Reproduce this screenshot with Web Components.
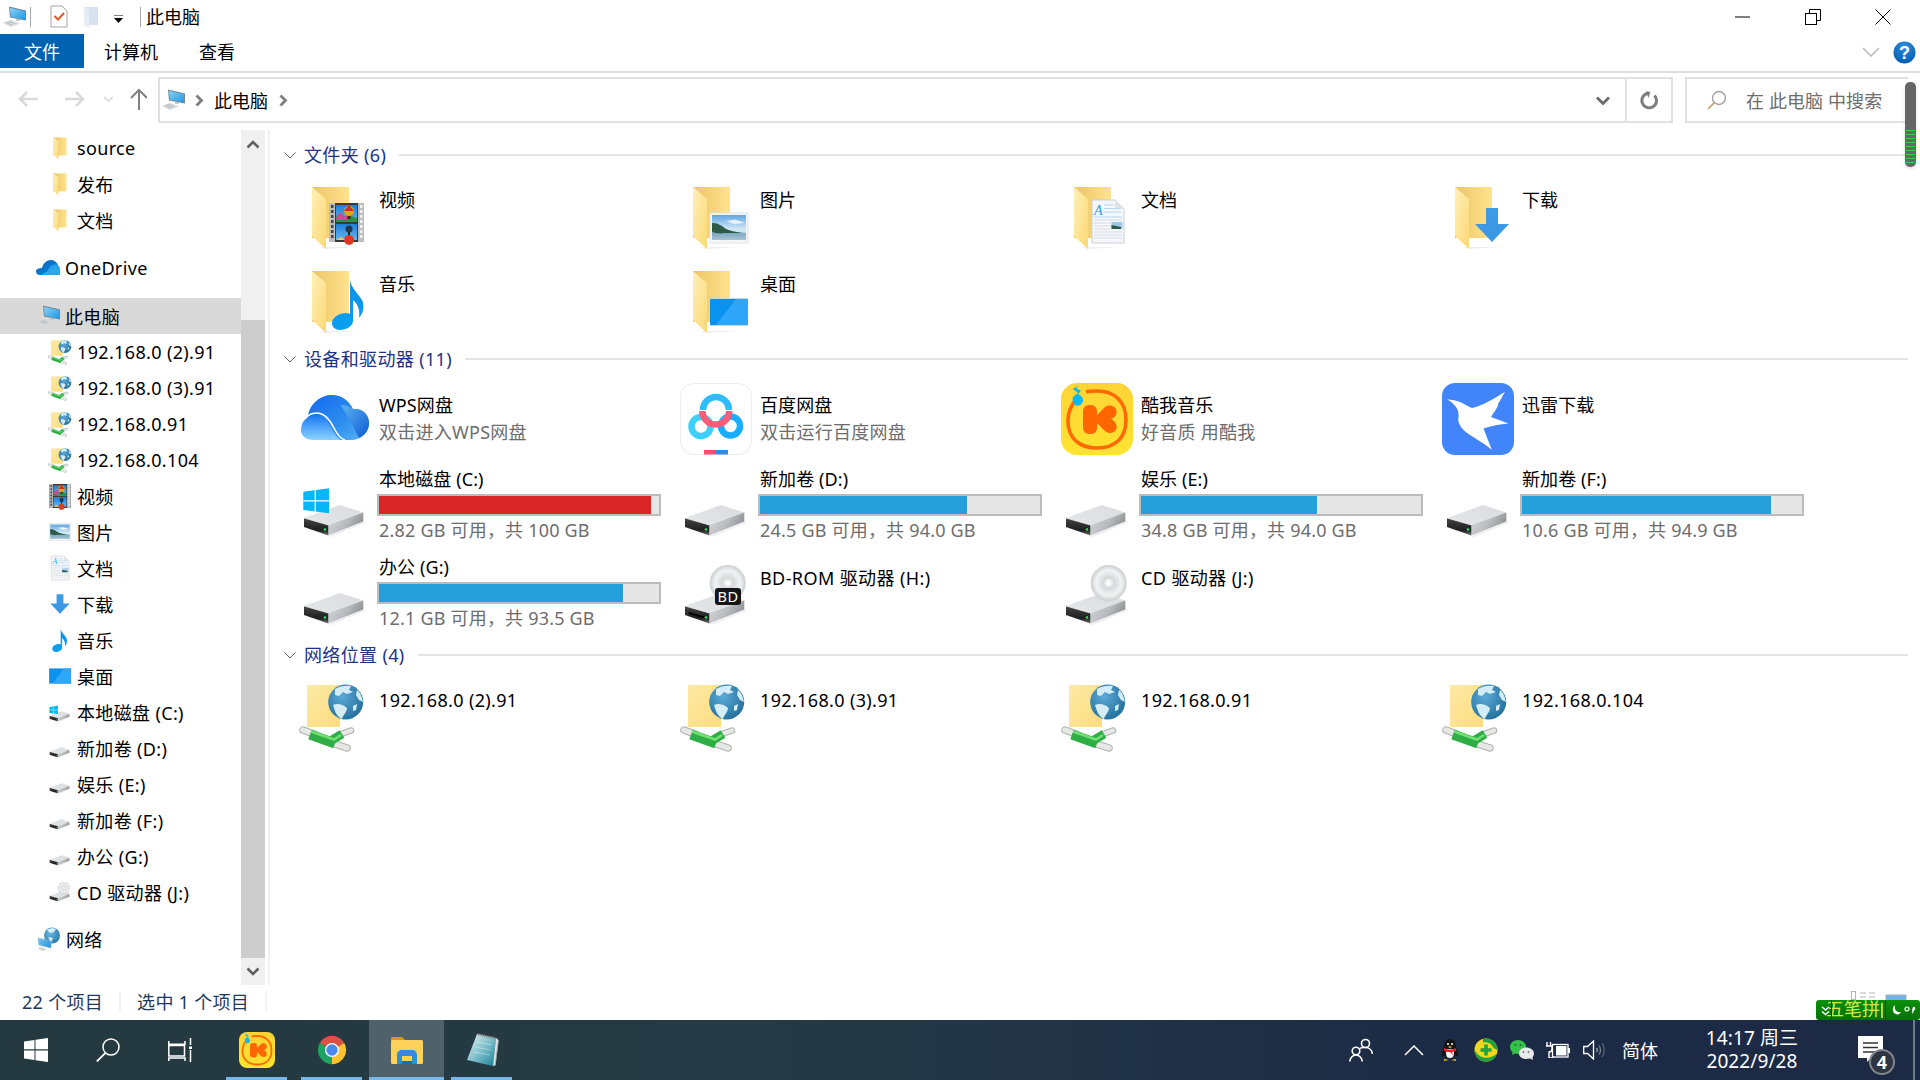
<!DOCTYPE html>
<html lang="zh-CN">
<head>
<meta charset="utf-8">
<title>此电脑</title>
<style>
html,body{margin:0;padding:0;background:#fff}
body{width:1920px;height:1080px;overflow:hidden;display:flex;flex-direction:column;position:relative;
font-family:"Noto Sans","Noto Sans CJK SC","DejaVu Sans",sans-serif;font-size:18px;color:#000}
</style>
</head>
<body>
<explorer-window></explorer-window>
<task-bar></task-bar>
<scroll-badge></scroll-badge>
<ime-bar></ime-bar>
<script>
/* ---------- icon pieces, drawn on a 72x72 tile box ---------- */
const grad=(id,x1,y1,x2,y2,stops)=>`<linearGradient id="${id}" x1="${x1}" y1="${y1}" x2="${x2}" y2="${y2}">${stops.map(([o,c])=>`<stop offset="${o}" stop-color="${c}"/>`).join('')}</linearGradient>`;
const P={};
P.folder=`<defs>${grad('fb',0,0,1,0,[[0,'#ecc566'],[1,'#ffe38e']])}${grad('ff',0,0,1,1,[[0,'#fff0b8'],[1,'#fbd874']])}</defs>
<path d="M20 62L60 62L27 64z" fill="#eee"/>
<path d="M13 2H50V53H13z" fill="url(#fb)"/><path d="M13 2L27 14V64L13 51z" fill="url(#ff)"/>`;
P.film=`<defs>${grad('s1',0,0,0,1,[[0,'#1c7fd8'],[1,'#69b5f0']])}</defs>
<rect x="30" y="18" width="35" height="39" fill="#3a3a3a"/>
<rect x="30" y="18" width="6" height="39" fill="#bdbdbd"/><rect x="59" y="18" width="6" height="39" fill="#bdbdbd"/>
${[20,25,30,35,40,45,50].map(y=>`<rect x="32" y="${y}" width="2.5" height="3" fill="#444"/><rect x="61" y="${y}" width="2.5" height="3" fill="#eee"/>`).join('')}
<rect x="37" y="20" width="21" height="17" fill="url(#s1)"/><rect x="37" y="39" width="21" height="16" fill="url(#s1)"/>
<path d="M37 37V31L42 28L46 32L50 30L58 33V37z" fill="#2e9147"/><path d="M37 33L41 27L45 32L48 30V35H37z" fill="#d3469b"/>
<circle cx="50" cy="26" r="5" fill="#e0a51b"/><path d="M45 26H55L50 20z" fill="#cf2d20"/><rect x="48.5" y="31" width="3" height="3" fill="#3a2c1a"/>
<circle cx="50" cy="44" r="3.5" fill="#26344b"/><rect x="49" y="47" width="2" height="3" fill="#222"/>
<circle cx="50" cy="55" r="5" fill="#dc3a1f"/><path d="M37 55L42 52L46 55z" fill="#e7c85c"/>`;
P.photo=`<defs>${grad('s2',0,0,0,1,[[0,'#5fa4e2'],[.55,'#cfe6f5'],[1,'#cfe6f5']])}${grad('w',0,0,0,1,[[0,'#4d7f9c'],[1,'#a4c4d6']])}</defs>
<rect x="30" y="28" width="38" height="30" fill="#f4f6f8" stroke="#dfe3e6" stroke-width="1"/>
<rect x="32" y="30" width="34" height="25" fill="url(#s2)"/>
<path d="M46 36c4 0 7-2 10-1s6 1 8 3l-10 1z" fill="#fff" opacity=".8"/>
<path d="M32 43V38C38 38 42 41 46 44C52 47 60 47 66 48V55H32z" fill="url(#w)"/>
<path d="M32 47V38C38 38 42 41 46 44C50 46 56 47 62 48H44C40 49 36 48 32 47z" fill="#2e5a46"/>`;
P.doc=`<path d="M31 15H54L63 24V58H31z" fill="#f5f7fa" stroke="#c9ced4" stroke-width="1"/><path d="M54 15V24H63z" fill="#dfe4ea"/>
<text x="33" y="30" font-family="Liberation Serif" font-style="italic" font-size="14" fill="#2f95e3">A</text>
<path d="M43 20H53M43 23.5H58M43 27H60M33 32H61" stroke="#b4d8f3" stroke-width="1" fill="none"/>
<path d="M33 35H61M33 38H50M33 41H50M33 44H50M33 47H61M33 50H61M33 53H61" stroke="#d6dbe1" stroke-width="1" fill="none"/>
<rect x="50.5" y="37" width="11" height="7" fill="#9dc8e6"/><path d="M50.5 44V40L60 42V44z" fill="#2f5a4c"/>`;
P.down=`<defs>${grad('d',0,0,0,1,[[0,'#3d9ce8'],[1,'#3a95e0']])}</defs><path d="M44 23H56V39H67L50 57L33 39H44z" fill="url(#d)"/>`;
P.note=`<defs>${grad('n',0,0,0,1,[[0,'#0b8fe6'],[1,'#0aa0f2']])}</defs>
<path d="M51 10C51 18 59 24 63 31C66 37 64 45 60 49C61 43 60 36 54 31V52C54 57 47 61 41 61C36 61 33 58 33 54C33 48 41 44 47 44C49 44 51 45 51 45z" fill="url(#n)"/>`;
P.desktop=`<rect x="30" y="29" width="38" height="28" fill="#c8d6de"/><rect x="30" y="30" width="38" height="26" fill="#0a93ee"/><path d="M36 56L56 30H68V56z" fill="#2ea7fa"/>`;
const drive=`<defs>${grad('dr',0,0,1,.4,[[0,'#d6d8dc'],[.6,'#b9bbbe'],[1,'#8f9194']])}${grad('dt',0,1,1,0,[[0,'#e6e7ea'],[1,'#d9dbde']])}${grad('df',0,0,0,1,[[0,'#454545'],[.7,'#1f1f1f'],[1,'#777']])}</defs>
<path d="M5 47L41 34L64.300 41.500L29.300 54z" fill="url(#dt)"/>
<path d="M29.300 54L64.300 41.500V50.500L29.300 64.500z" fill="url(#dr)"/>
<path d="M5 47L29.300 54V64.500L5 56z" fill="url(#df)"/><path d="M5 47L29.300 54" stroke="#f2f2f2" stroke-width=".7"/>
<circle cx="26" cy="58.500" r="1.300" fill="#35e25c"/><path d="M29 65L64 51L68 51L32 66z" fill="#eee"/>`;
P.drive=drive;
P.windrive=drive+`<path d="M4.300 20.700L30 17.300V42.300L4.300 39z" fill="#05b7f5"/><path d="M16.300 19V41M4.300 29.800H30" stroke="#fff" stroke-width="1.300"/>`;
const disc=`<defs><radialGradient id="cdr"><stop offset="0" stop-color="#f7f7f7"/><stop offset=".35" stop-color="#d9dcdd"/><stop offset=".7" stop-color="#f2f3f3"/><stop offset="1" stop-color="#cbced0"/></radialGradient></defs>
<circle cx="47.700" cy="24" r="18" fill="url(#cdr)"/><circle cx="47.700" cy="24" r="5" fill="#eee" stroke="#cfd2d3" stroke-width="1"/><circle cx="47.700" cy="24" r="2" fill="#fff"/>`;
P.bd=drive+disc+`<rect x="35" y="29" width="26" height="17" rx="3" fill="#151515"/><text x="48" y="43" text-anchor="middle" font-family="Noto Sans" font-size="14.500" fill="#fff">BD</text><rect x="9" y="53" width="16" height="2" fill="#000" transform="rotate(16 9 53)"/>`;
P.cd=drive+disc;
P.net=`<defs>${grad('nf',0,0,1,1,[[0,'#fdeaa6'],[1,'#fedc7c']])}<radialGradient id="g" cx=".4" cy=".35" r=".75"><stop offset="0" stop-color="#5aa9d8"/><stop offset="1" stop-color="#1e6a96"/></radialGradient></defs>
<rect x="8" y="1" width="33" height="42" fill="url(#nf)"/>
<circle cx="46.700" cy="18" r="17.500" fill="url(#g)"/>
<path d="M36 5C40 2 48 1 52 2L50 6L54 8L48 10L44 8L40 12L36 11zM58 6C62 9 63 14 64 18L60 16L57 11zM34 21C38 19 44 20 48 24C48 28 44 31 43 35C40 34 37 30 36 27zM54 22L58 20L57 26L54 27z" fill="#d4ecf5"/>
<path d="M4 46L16 50.500" stroke="#aeb3ae" stroke-width="7.500" stroke-linecap="round"/><path d="M4 46L16 50.500" stroke="#e6e8e6" stroke-width="5.500" stroke-linecap="round"/>
<path d="M36 60L48 64" stroke="#aeb3ae" stroke-width="7.500" stroke-linecap="round"/><path d="M36 60L48 64" stroke="#e6e8e6" stroke-width="5.500" stroke-linecap="round"/>
<path d="M42 50L52 46.500" stroke="#aeb3ae" stroke-width="6.500" stroke-linecap="round"/><path d="M42 50L52 46.500" stroke="#e6e8e6" stroke-width="4.500" stroke-linecap="round"/>
<path d="M11 50.500L36 59.500" stroke="#2fae45" stroke-width="10" fill="none"/>
<path d="M33 56L43 50" stroke="#2fae45" stroke-width="9" fill="none"/>
<path d="M12 47.500L35 55.500L42 51" stroke="#74de76" stroke-width="2.500" fill="none"/>`;
P.wps=`<defs>${grad('w1',0,0,1,1,[[0,'#1268f0'],[.6,'#2f90ee'],[1,'#5db6f5']])}${grad('w2',0,0,0,1,[[0,'#1a78f2'],[1,'#8bd2ff']])}${grad('w3',0,0,1,1,[[0,'#5fb4ef'],[1,'#0c5ad6']])}</defs>
<path d="M9 33C11 20 22 12 33 12C43 12 50 18 54 26C63 25 70 31 70 40C70 50 62 57 52 57H20z" fill="url(#w1)"/>
<path d="M54 26C63 25 70 31 70 40C70 47 66 52 60 55C56 48 52 38 47 31C45 27 43 24 42 22C47 22 51 24 54 26z" fill="url(#w3)"/>
<path d="M2 47C2 38 9 32 17 32C25 32 29 38 33 46C36 52 38 55 42 57H14C7 57 2 53 2 47z" fill="url(#w2)"/>
<path d="M9 33C11 31 14 30 18 30C26 30 31 37 35 45C38 51 41 56 46 57" stroke="#fff" stroke-width="1.600" fill="none"/>`;
P.baidu=`<rect x=".5" y=".5" width="71" height="71" rx="13" fill="#fff" stroke="#ececec"/>
<circle cx="21" cy="43.500" r="9.500" fill="none" stroke="#3dd0fd" stroke-width="6.500"/>
<circle cx="50.500" cy="43" r="9.500" fill="none" stroke="#18adfe" stroke-width="6.500"/>
<path d="M23 27a13 13 0 0 1 26 0" fill="none" stroke="#2ebdfa" stroke-width="6.500"/>
<path d="M22.300 28a13.500 13.500 0 0 0 27 0" fill="none" stroke="#fb5c79" stroke-width="6.500"/>
<rect x="24" y="67" width="12" height="4.500" fill="#fb4d6d"/><rect x="36" y="67" width="12" height="4.500" fill="#2b8cf5"/>`;
P.kuwo=`<defs>${grad('ky',0,0,0,1,[[0,'#ffd335'],[1,'#ffe42f']])}</defs><rect width="72" height="72" rx="16" fill="url(#ky)"/>
<path d="M14 18C9 24 7 30 7 38C7 55 18 65 36 65C54 65 65 55 65 37C65 19 54 8 36 8C32 8 28 8 25 9" fill="none" stroke="#ff6a00" stroke-width="3.600"/>
<rect x="22" y="22" width="14" height="29" rx="6" fill="#ff6600"/>
<path d="M32 36L44 24C50 20 58 25 55 32C54 34 51 36 49 36C51 36 54 38 55 41C58 48 50 53 44 48z" fill="#ff6600"/>
<path d="M18 2L12 6L17 10L13 13C11 15 11 19 14 22C18 24 22 21 22 17C22 14 19 12 17 11L20 8L15 5z" fill="#04b9f5"/>`;
P.xunlei=`<rect width="72" height="72" rx="13" fill="#4285fb"/>
<path d="M5 16.300C10 17 14 17.500 18 19C23 21 27 24 30 25C40 23 53 15 63 8.700C60 14 58 18 56 21C56 25 51 30 49 34C54 36 60 38 66.500 40.500C58 41 49 43 41.500 45.500C44 52 47 60 50 67C42 60 34 56 28 52C20 47 15 40 16.500 34C17 30 16 27 14 24C12 21 8 18 5 16.300z" fill="#fff"/>`;
P.nav_net=`<defs>${grad('m',0,0,1,1,[[0,'#7cc8f2'],[1,'#1b8fdc']])}<radialGradient id="g2" cx=".4" cy=".35" r=".8"><stop offset="0" stop-color="#69b5df"/><stop offset="1" stop-color="#20709f"/></radialGradient></defs>
<circle cx="15" cy="8.500" r="8" fill="url(#g2)"/><path d="M10 3C13 1 17 1 19 2L17 5L13 6zM11 10L16 11L14 16z" fill="#d6eef7"/>
<path d="M1 11L14 14V21L2 18z" fill="url(#m)" stroke="#8db4cc" stroke-width=".6"/><path d="M3 20L10 22L6 24L1 22z" fill="#cfd4d8"/>`;
P.pc=`<defs>${grad('pm',0,0,1,1,[[0,'#8bd0f5'],[1,'#1c9ce8']])}</defs>
<path d="M7 1.500L24 5.500V15.500L8 12.500z" fill="#6d8597"/><path d="M8 2.800L23 6.300V14.500L8.800 11.700z" fill="url(#pm)"/>
<path d="M14 13.500L18 14.300L18 16L14 15.500z" fill="#b9c2c9"/>
<path d="M1 18L9 15L18 18.500L9 22z" fill="#d7dadd"/><path d="M3 18L9 16M5 19L11 17M7 20L13 18" stroke="#aeb3b7" stroke-width=".6"/>`;
P.onedrive=`<defs>${grad('od',0,0,1,1,[[0,'#0b68c4'],[1,'#0a85d9']])}${grad('od2',0,0,1,1,[[0,'#2aa6ef'],[1,'#1c8fe2']])}</defs>
<path d="M6 8C7 3 11 0 15 0C18 0 21 2 22 5L12 15H4C1 15 0 13 0 11C0 9 3 8 6 8z" fill="url(#od)"/>
<path d="M8 15L14 7C17 4 20 4 22 5.500C25 6 24 15 24 15z" fill="url(#od2)"/><path d="M24 8.500V15H6.500C6 15 7 13.500 8 13C10 12 11 12 12 12L13 10C16 7 21 6 24 8.500z" fill="#2aa8ee"/>`;
P.t_video=P.folder+P.film; P.t_photo=P.folder+P.photo; P.t_doc=P.folder+P.doc; P.t_down=P.folder+P.down; P.t_note=P.folder+P.note; P.t_desk=P.folder+P.desktop;

/* ---------- tiny element factory ---------- */
function def(tag,css,render){
  customElements.define(tag,class extends HTMLElement{
    connectedCallback(){
      if(this.shadowRoot) return;
      const root=this.attachShadow({mode:'open'});
      root.innerHTML=`<style>${css}</style>`+render(this);
    }
  });
}

/* x-ic: one icon from the table, at a size, optional crop */
def('x-ic',`:host{display:inline-flex;flex:none;line-height:0}svg{display:block;overflow:visible}`,el=>{
  const s=el.getAttribute('size')||72, vb=el.getAttribute('vb')||'0 0 72 72', h=el.getAttribute('h')||s;
  return `<svg xmlns="http://www.w3.org/2000/svg" width="${s}" height="${h}" viewBox="${vb}">${P[el.getAttribute('name')]}</svg>`;
});

/* title bar */
def('title-bar',`:host{display:flex;align-items:center;height:33px;flex:none}
.sep{width:1px;height:20px;background:#a8a8a8;flex:none}
.t{margin-left:5px;line-height:33px;padding-top:2px}
.btns{margin-left:auto;display:flex;padding-right:2px}
.b{width:70px;height:33px;display:flex;align-items:center;justify-content:center}
svg{display:block}`,()=>`
<x-ic name="pc" size="24" vb="0 0 24 24" style="margin:0 3px 0 2px"></x-ic>
<span class="sep" style="margin-right:19px;margin-left:1px"></span>
<svg width="18" height="23" viewBox="0 0 18 23"><path d="M1 1H12L17 6V22H1z" fill="#fff" stroke="#a5a5a5"/><path d="M4.500 11L8 14.500L14 8" fill="none" stroke="#e8562a" stroke-width="2"/></svg>
<svg width="15" height="22" viewBox="0 0 15 22" style="margin-left:16px"><path d="M0 1H14V19H5V22L0 19z" fill="#d8e1f0"/><path d="M0 1L5 4V22L0 19z" fill="#e7edf6"/></svg>
<svg width="9" height="8" viewBox="0 0 9 8" style="margin-left:15px;margin-top:4px"><path d="M0 0H9" stroke="#000"/><path d="M0 3H9L4.500 8z" fill="#000"/></svg>
<span class="sep" style="margin-left:17px"></span>
<span class="t">此电脑</span>
<div class="btns">
<div class="b"><svg width="16" height="16" viewBox="0 0 16 16"><path d="M0 8H15" stroke="#000"/></svg></div>
<div class="b"><svg width="16" height="16" viewBox="0 0 16 16"><rect x=".5" y="4.500" width="11" height="11" fill="none" stroke="#000"/><path d="M4.500 4V.5H15.500V11.500H12" fill="none" stroke="#000"/></svg></div>
<div class="b"><svg width="16" height="16" viewBox="0 0 16 16"><path d="M.5.500L15.500 15.500M15.500.5L.5 15.500" stroke="#000" fill="none"/></svg></div>
</div>`);

/* ribbon tabs */
def('rib-bon',`:host{display:flex;align-items:flex-start;height:38px;flex:none;border-bottom:2px solid #dfdfdf;box-sizing:content-box}
.tab{height:34px;line-height:36px;margin-top:1px;text-align:center}
.file{width:84px;background:#0063b1;color:#fff}
.right{margin-left:auto;display:flex;align-items:center;height:38px}
svg{display:block}`,()=>`
<div class="tab file">文件</div>
<div class="tab" style="margin-left:20px">计算机</div>
<div class="tab" style="margin-left:41px">查看</div>
<div class="right">
<svg width="18" height="10" viewBox="0 0 18 10" style="margin-right:13px"><path d="M1 1L9 9L17 1" fill="none" stroke="#bdbdbd" stroke-width="1.600"/></svg>
<svg width="23" height="23" viewBox="0 0 23 23" style="margin-right:4px"><defs><radialGradient id="h" cx=".5" cy=".25" r=".8"><stop offset="0" stop-color="#2d8fe0"/><stop offset="1" stop-color="#0058a8"/></radialGradient></defs><circle cx="11.500" cy="11.500" r="11" fill="url(#h)"/><text x="11.500" y="18" text-anchor="middle" font-family="Liberation Sans" font-weight="700" font-size="18" fill="#fff">?</text></svg>
</div>`);

/* address row */
def('address-row',`:host{display:flex;align-items:center;height:57px;flex:none;box-sizing:border-box}
svg{display:block;flex:none}
.box{height:46px;box-sizing:border-box;border:2px solid #e1e1e1;display:flex;align-items:center;margin-top:-3px}
.addr{width:1515px;margin-left:11px}
.search{width:223px;margin-left:12px;color:#6d6d6d;border-right:0;padding-left:20px}
.sp{flex:1}
.v{width:2px;height:100%;background:#e1e1e1}
`,()=>`
<svg width="147" height="24" viewBox="0 0 147 24" style="margin-top:-6px">
<path d="M38 12H20M27 5L20 12L27 19" fill="none" stroke="#d9d9d9" stroke-width="2.500"/>
<path d="M65 12H83M76 5L83 12L76 19" fill="none" stroke="#d9d9d9" stroke-width="2.500"/>
<path d="M104 10L108.500 14L113 10" fill="none" stroke="#dcdcdc" stroke-width="1.800"/>
<path d="M139 23V3M131 11L139 3L147 11" fill="none" stroke="#808080" stroke-width="2"/></svg>
<div class="box addr">
<x-ic name="pc" size="24" vb="0 0 24 24" style="margin-left:1px"></x-ic>
<svg width="9" height="13" viewBox="0 0 9 13" style="margin-left:10px"><path d="M1.500 1.500L6.500 6.500L1.500 11.500" fill="none" stroke="#7d7d7d" stroke-width="2.800"/></svg>
<span style="margin-left:10px">此电脑</span>
<svg width="9" height="13" viewBox="0 0 9 13" style="margin-left:11px"><path d="M1.500 1.500L6.500 6.500L1.500 11.500" fill="none" stroke="#7d7d7d" stroke-width="2.800"/></svg>
<span class="sp"></span>
<svg width="14" height="9" viewBox="0 0 14 9"><path d="M1 1.500L7 7.500L13 1.500" fill="none" stroke="#6b6b6b" stroke-width="2.800"/></svg>
<span style="width:15px"></span><span class="v"></span>
<svg width="18" height="19" viewBox="0 0 18 19" style="margin:0 13px 0 13px"><path d="M14.500 4.500A7.300 7.300 0 1 1 8 2.300" fill="none" stroke="#7d7d7d" stroke-width="3"/><path d="M7 0V7L11 1.800z" fill="#7d7d7d" transform="rotate(-20 8 3)"/></svg>
</div>
<div class="box search">
<svg width="20" height="20" viewBox="0 0 20 20"><circle cx="12" cy="8" r="6.500" fill="none" stroke="#a0a0a0" stroke-width="1.400"/><path d="M7.500 12.500L1 19" stroke="#c69a6a" stroke-width="1.600"/></svg>
<span style="margin-left:19px;white-space:nowrap;letter-spacing:.1px">在 此电脑 中搜索</span>
</div>`);

/* nav row */
def('nav-row',`:host{display:flex;align-items:center;height:36px;box-sizing:border-box;white-space:nowrap;letter-spacing:.35px}
:host([on]){background:#d9d9d9}
x-ic{margin-right:5px}`,el=>{
  const l=el.getAttribute('level')==='1'; const pad=l?(el.getAttribute('pad')||36):48;
  const size=el.getAttribute('size')||24;
  const vb=el.getAttribute('vb')||(el.getAttribute('icon')==='pc'?'0 0 24 24':'0 0 72 72');
  return `<x-ic name="${el.getAttribute('icon')}" size="${size}" vb="${vb}" style="margin-left:${pad}px"></x-ic><slot></slot>`;
});

/* nav pane */
def('nav-pane',`:host{display:flex;width:270px;flex:none;height:855px}
.list{width:241px;flex:none}
.gap{height:12px}.gap2{height:11px}
.bar{width:24px;flex:none;background:#f0f0f0;display:flex;flex-direction:column;align-items:center}
.bt{height:190px;width:24px;padding-top:10px;box-sizing:border-box;display:flex;justify-content:center}
.th{height:638px;width:24px;background:#cdcdcd}
.bb{flex:1;display:flex;justify-content:center;align-items:center}
.edge{width:3px}.line{width:2px;background:#f0f0f0}
svg{display:block}`,()=>`
<div class="list">
<nav-row icon="folder" vb="-2 -2 67 68" size="24">source</nav-row>
<nav-row icon="folder" vb="-2 -2 67 68">发布</nav-row>
<nav-row icon="folder" vb="-2 -2 67 68">文档</nav-row>
<div class="gap"></div>
<nav-row level="1" icon="onedrive" vb="0 0 24 16" h="16">OneDrive</nav-row>
<div class="gap"></div>
<nav-row level="1" on icon="pc" pad="36" size="24">此电脑</nav-row>
<nav-row icon="net" vb="0 0 66 66">192.168.0 (2).91</nav-row>
<nav-row icon="net" vb="0 0 66 66">192.168.0 (3).91</nav-row>
<nav-row icon="net" vb="0 0 66 66">192.168.0.91</nav-row>
<nav-row icon="net" vb="0 0 66 66">192.168.0.104</nav-row>
<nav-row icon="film" vb="28 18 39 39">视频</nav-row>
<nav-row icon="photo" vb="28 22 42 42">图片</nav-row>
<nav-row icon="doc" vb="25 15 43 43">文档</nav-row>
<nav-row icon="down" vb="29 19 42 42">下载</nav-row>
<nav-row icon="note" vb="24 10 51 51">音乐</nav-row>
<nav-row icon="desktop" vb="28 22 42 42">桌面</nav-row>
<nav-row icon="windrive">本地磁盘 (C:)</nav-row>
<nav-row icon="drive">新加卷 (D:)</nav-row>
<nav-row icon="drive">娱乐 (E:)</nav-row>
<nav-row icon="drive">新加卷 (F:)</nav-row>
<nav-row icon="drive">办公 (G:)</nav-row>
<nav-row icon="cd">CD 驱动器 (J:)</nav-row>
<div class="gap2"></div>
<nav-row level="1" icon="nav_net" vb="0 0 24 24" pad="37">网络</nav-row>
</div>
<div class="bar">
<div class="bt"><svg width="14" height="9" viewBox="0 0 14 9"><path d="M1.500 7.500L7 2L12.500 7.500" fill="none" stroke="#606060" stroke-width="2.600"/></svg></div>
<div class="th"></div>
<div class="bb"><svg width="14" height="9" viewBox="0 0 14 9"><path d="M1.500 1.500L7 7L12.500 1.500" fill="none" stroke="#606060" stroke-width="2.600"/></svg></div>
</div>
<div class="edge"></div><div class="line"></div>`);

/* group heading */
def('group-head',`:host{display:flex;align-items:center;height:24px;color:#1e3287;white-space:nowrap;letter-spacing:.35px}
svg{margin:0 8px 0 14px;display:block;flex:none}
.lab{display:block;padding-bottom:1px;line-height:22px}
.rule{flex:1;height:2px;background:#e5e5e5;margin:0 12px 0 13px}`,()=>`
<svg width="12" height="7" viewBox="0 0 12 7"><path d="M.5.500L6 6L11.500.5" fill="none" stroke="#666" stroke-width="1"/></svg>
<span class="lab"><slot></slot></span><span class="rule"></span>`);

/* grid */
def('tile-grid',`:host{display:grid;grid-template-columns:repeat(4,381px);margin-left:29px}`,()=>`<slot></slot>`);

/* plain tile */
def('tile-item',`:host{display:flex;height:84px;box-sizing:border-box;padding-top:6px;gap:8px;white-space:nowrap}
:host([latin]){letter-spacing:.35px}
.t{padding-top:3px;line-height:24px}
:host([latin]) .t{padding-top:4px}`,el=>`<x-ic name="${el.getAttribute('icon')}"></x-ic><div class="t"><slot></slot></div>`);

/* app tile */
def('app-tile',`:host{display:flex;height:88px;align-items:center;gap:8px;white-space:nowrap}
.n{line-height:27px;letter-spacing:.1px}.s{line-height:27px;height:27px;color:#6d6d6d;letter-spacing:.25px}`,el=>`<x-ic name="${el.getAttribute('icon')}"></x-ic><div><div class="n"><slot></slot></div><div class="s">${el.getAttribute('sub')}</div></div>`);

/* drive tile */
def('drive-tile',`:host{display:flex;height:88px;gap:6px;white-space:nowrap;box-sizing:border-box;padding-top:8px}
.c{margin-top:-4px;width:284px}
.n{line-height:24px;padding-left:2px;letter-spacing:.1px}
.bar{height:22px;box-sizing:border-box;border:2px solid #bcbcbc;background:#e6e6e6;margin-top:3px}
.f{height:100%}
.s{line-height:24px;padding-left:2px;margin-top:2px;color:#6d6d6d;letter-spacing:.2px}`,el=>`<x-ic name="${el.getAttribute('icon')}"></x-ic><div class="c"><div class="n"><slot></slot></div><div class="bar"><div class="f" style="width:${el.getAttribute('pct')}%;background:${el.getAttribute('color')||'#26a0da'}"></div></div><div class="s">${el.getAttribute('sub')}</div></div>`);

/* optical tile */
def('disc-tile',`:host{display:flex;height:88px;gap:8px;white-space:nowrap;box-sizing:border-box;padding-top:8px;letter-spacing:.4px}
.t{padding-top:7px;line-height:24px}`,el=>`<x-ic name="${el.getAttribute('icon')}"></x-ic><div class="t"><slot></slot></div>`);

/* content pane */
def('content-pane',`:host{display:block;flex:1;min-width:0;padding-top:13px;box-sizing:border-box}
.g1{margin-top:12px}.g2{margin-top:4px}.g3{margin-top:4px}.g4{margin-top:11px}`,()=>`
<group-head>文件夹 (6)</group-head>
<tile-grid class="g1">
<tile-item icon="t_video">视频</tile-item><tile-item icon="t_photo">图片</tile-item><tile-item icon="t_doc">文档</tile-item><tile-item icon="t_down">下载</tile-item>
<tile-item icon="t_note">音乐</tile-item><tile-item icon="t_desk">桌面</tile-item>
</tile-grid>
<group-head>设备和驱动器 (11)</group-head>
<tile-grid class="g2">
<app-tile icon="wps" sub="双击进入WPS网盘">WPS网盘</app-tile>
<app-tile icon="baidu" sub="双击运行百度网盘">百度网盘</app-tile>
<app-tile icon="kuwo" sub="好音质 用酷我">酷我音乐</app-tile>
<app-tile icon="xunlei" sub="">迅雷下载</app-tile>
<drive-tile icon="windrive" pct="97" color="#da2626" sub="2.82 GB 可用，共 100 GB">本地磁盘 (C:)</drive-tile>
<drive-tile icon="drive" pct="74" sub="24.5 GB 可用，共 94.0 GB">新加卷 (D:)</drive-tile>
<drive-tile icon="drive" pct="63" sub="34.8 GB 可用，共 94.0 GB">娱乐 (E:)</drive-tile>
<drive-tile icon="drive" pct="89" sub="10.6 GB 可用，共 94.9 GB">新加卷 (F:)</drive-tile>
<drive-tile icon="drive" pct="87" sub="12.1 GB 可用，共 93.5 GB">办公 (G:)</drive-tile>
<disc-tile icon="bd">BD-ROM 驱动器 (H:)</disc-tile>
<disc-tile icon="cd">CD 驱动器 (J:)</disc-tile>
</tile-grid>
<group-head class="g3">网络位置 (4)</group-head>
<tile-grid class="g4">
<tile-item latin icon="net">192.168.0 (2).91</tile-item><tile-item latin icon="net">192.168.0 (3).91</tile-item><tile-item latin icon="net">192.168.0.91</tile-item><tile-item latin icon="net">192.168.0.104</tile-item>
</tile-grid>`);

/* status */
def('status-bar',`:host{display:flex;align-items:center;height:35px;flex:none;color:#1e395b;white-space:nowrap;padding:0 0 3px 22px;box-sizing:border-box;letter-spacing:.3px}
.s{width:2px;height:20px;background:#f2f2f2;flex:none}`,()=>`
<span>22 个项目</span><span class="s" style="margin:0 16px"></span><span>选中 1 个项目</span><span class="s" style="margin-left:16px"></span>`);

def('explorer-window',`:host{display:flex;flex-direction:column;height:1020px;flex:none;background:#fff}
.main{display:flex;flex:1;min-height:0}`,()=>`
<title-bar></title-bar><rib-bon></rib-bon><address-row></address-row>
<div class="main"><nav-pane></nav-pane><content-pane></content-pane></div>
<status-bar></status-bar>`);

/* task bar */
def('task-btn',`:host{display:flex;align-items:center;justify-content:center;width:75px;height:60px;position:relative;flex:none}
:host([active]){background:#4f626b}
:host::after{content:"";position:absolute;left:7px;right:7px;bottom:0;height:3px;background:#76b9ed}
:host([active])::after{left:0;right:0}`,()=>`<slot></slot>`);

def('tray-item',`:host{display:flex;align-items:center;justify-content:center;width:36px;height:60px;flex:none}`,()=>`<slot></slot>`);

def('task-bar',`:host{display:flex;align-items:center;height:60px;flex:none;color:#fff;white-space:nowrap;
background:linear-gradient(90deg,#24393f 0,#263a45 40%,#1c2b45 75%,#1c2a45 100%)}
.l{width:72px;height:60px;display:flex;align-items:center;justify-content:center;flex:none}
svg{display:block}
.tray{margin-left:auto;display:flex;align-items:center;height:60px}
.clock{width:144px;text-align:center;line-height:23px;font-size:19px;letter-spacing:.1px;margin-top:-1px}
.note{width:56px;height:60px;position:relative;display:flex;justify-content:center;align-items:center}
.badge{position:absolute;left:27px;top:29px;width:22px;height:22px;border:2px solid #80868e;border-radius:50%;background:#2e3540;
display:flex;align-items:center;justify-content:center;font-weight:700;font-size:18px;line-height:1}
.dl{width:2px;height:60px;background:#6f7a88;margin:0 5px 0 15px}`,()=>`
<div class="l"><svg width="24" height="24" viewBox="0 0 24 24"><path d="M0 3.400L10.500 2V11.300H0zM11.500 1.800L24 0V11.300H11.500zM0 12.500H10.500V22L0 20.600zM11.500 12.500H24V24L11.500 22.200z" fill="#fff"/></svg></div>
<div class="l"><svg width="24" height="24" viewBox="0 0 24 24"><circle cx="15" cy="9" r="8" fill="none" stroke="#fff" stroke-width="1.500"/><path d="M9.500 14.800L.8 23.500" stroke="#fff" stroke-width="1.800"/></svg></div>
<div class="l"><svg width="24" height="24" viewBox="0 0 24 24"><path d="M.8 3V6.300H17V3M.8 23V20H17V23M.8 7.500H16.500V18H.8z" fill="none" stroke="#fff" stroke-width="1.500"/><path d="M22.500 0V7M22.500 12V24" stroke="#fff" stroke-width="1.500"/><rect x="21" y="8.500" width="3" height="2.500" fill="#fff"/></svg></div>
<span style="width:3px;flex:none"></span>
<task-btn><x-ic name="kuwo" size="36"></x-ic></task-btn>
<task-btn><svg width="34" height="34" viewBox="0 0 48 48"><path d="M24 24L6.700 14A20 20 0 0 1 41.300 14z" fill="#dd5144"/><path d="M24 24L41.300 14A20 20 0 0 1 24 44z" fill="#fbc32d"/><path d="M24 24L24 44A20 20 0 0 1 6.700 14z" fill="#1ea362"/><circle cx="24" cy="24" r="10" fill="#fff"/><circle cx="24" cy="24" r="8" fill="#4a88ee"/></svg></task-btn>
<task-btn active><svg width="32" height="27" viewBox="0 0 32 27"><path d="M0 1.500C0 .5 .5 0 1.500 0H11L15 4H0z" fill="#d49b1a"/><rect x="0" y="3" width="32" height="24" rx="1.500" fill="#fcd25a"/><path d="M6 27V18C6 15 8 13 11 13H21C24 13 26 15 26 18V27H21V19H11V27z" fill="#2d8fdc"/><rect x="11" y="24" width="10" height="3" fill="#1b6bb8"/></svg></task-btn>
<task-btn><svg width="34" height="34" viewBox="0 0 34 34"><defs><linearGradient id="np" x1="0" y1="0" x2="1" y2="1"><stop offset="0" stop-color="#eef4f5"/><stop offset=".5" stop-color="#7fc1cc"/><stop offset="1" stop-color="#167f96"/></linearGradient></defs><path d="M12 1L31 5L28 33L2 27z" fill="url(#np)"/><path d="M28 33L31 5L33.500 7L30.500 32z" fill="#dfe4e6"/><path d="M30 33L33.500 7" stroke="#9aa2a6" stroke-width=".8"/><path d="M13 1.500L31 5.500" stroke="#7f878b" stroke-width="2.500" stroke-dasharray="1 1"/><path d="M12 9L27 12M10 14L26 17M9 19L25 22" stroke="#fff" stroke-opacity=".45" stroke-width=".8"/></svg></task-btn>
<div class="tray">
<tray-item style="width:44px;margin-right:13px"><svg width="24" height="24" viewBox="0 0 24 24" fill="none" stroke="#fff" stroke-width="1.600"><circle cx="16.500" cy="5.500" r="4"/><path d="M10 11C12 9 14 9.500 16.500 9.500C20 9.500 23 12 23.500 16"/><circle cx="7" cy="13" r="3.800"/><path d="M.8 23.500C1 20 3.500 17 7 17C10.500 17 13 20 13.200 23.500"/></svg></tray-item>
<tray-item><svg width="20" height="11" viewBox="0 0 20 11"><path d="M1 10L10 1L19 10" fill="none" stroke="#fff" stroke-width="1.500"/></svg></tray-item>
<tray-item><svg width="18" height="24" viewBox="0 0 18 24"><path d="M9 1C13 1 15 4 15 8C15 10 17 14 17 17C17 19 15 18 14 17C13 21 5 21 4 17C3 18 1 19 1 17C1 14 3 10 3 8C3 4 5 1 9 1z" fill="#151515"/><path d="M5 11C5 17 5 20 9 20C13 20 13 17 13 11z" fill="#fff"/><path d="M3 10C7 12 11 12 15 10V13L11 14L12 17L9 14C7 14 5 14 3 13z" fill="#e8242a"/><path d="M7 9L9 8L11 9L9 10z" fill="#f4b51e"/><path d="M3 21L8 22L3 23zM15 21L10 22L15 23z" fill="#f4b51e"/><circle cx="7" cy="6" r="1" fill="#fff"/><circle cx="11" cy="6" r="1" fill="#fff"/></svg></tray-item>
<tray-item><svg width="24" height="24" viewBox="0 0 24 24"><circle cx="12" cy="12" r="11.500" fill="#f3d71e"/><path d="M12 .5A11.500 11.500 0 0 1 23.500 12L19.500 10C18 6 14 3.500 9 4.500L9 1z" fill="#1da33f"/><path d="M.5 12A11.500 11.500 0 0 0 12 23.500C18 23.500 21.500 20 22.500 16C18 20 10 21 6 18C3.500 16.500 2 14 .5 12z" fill="#1da33f"/><path d="M10.200 6.500H13.800V10.200H17.500V13.800H13.800V17.500H10.200V13.800H6.500V10.200H10.200z" fill="#1da33f"/></svg></tray-item>
<tray-item><svg width="24" height="20" viewBox="0 0 24 20"><path d="M8 0C12.500 0 16 3 16 7C16 11 12.500 14 8 14C7 14 6 13.800 5 13.500L2 15L2.500 12C1 10.700 0 9 0 7C0 3 3.500 0 8 0z" fill="#35c04a"/><path d="M16 7.500C20.500 7.500 24 10 24 13.500C24 15 23.300 16.300 22.500 17.200L23 20L20 18.500C19 18.800 17.500 19 16 19C12 19 9 16.500 9 13.500C9 10 12 7.500 16 7.500z" fill="#e9e9e9"/><circle cx="5.500" cy="5" r="1" fill="#14722b"/><circle cx="10.500" cy="5" r="1" fill="#14722b"/><circle cx="13.500" cy="12" r=".9" fill="#777"/><circle cx="18.500" cy="12" r=".9" fill="#777"/></svg></tray-item>
<tray-item><svg width="24" height="16" viewBox="0 0 24 16"><path d="M1 0V4M4.500 0V4M0 4H6V7C6 9 4.500 10 3 10V16H8" fill="none" stroke="#fff" stroke-width="1.400"/><rect x="6.500" y="2.500" width="15.500" height="12.500" fill="none" stroke="#fff" stroke-width="1.300"/><rect x="10" y="4" width="10.500" height="9.500" fill="#fff"/><rect x="22" y="6" width="2" height="5" fill="#fff"/></svg></tray-item>
<tray-item><svg width="22" height="20" viewBox="0 0 22 20" fill="none"><path d="M.7 6.500H4.500L10.500 1V19L4.500 13.500H.7z" stroke="#fff" stroke-width="1.300"/><path d="M13.500 8C14.500 9 14.500 11 13.500 12" stroke="#aab0b8" stroke-width="1.200"/><path d="M16 5.500C18 8 18 12 16 14.500" stroke="#7d8490" stroke-width="1.200"/><path d="M19 3C22 7 22 13 19 17" stroke="#5e6675" stroke-width="1.200"/></svg></tray-item>
<tray-item style="width:56px">简体</tray-item>
<div class="clock" style="margin-left:12px">14:17 周三<br>2022/9/28</div>
<div class="note" style="margin-left:18px"><svg width="25" height="26" viewBox="0 0 25 26" style="margin-top:-2px"><path d="M0 0H25V22H13L9 26V22H0z" fill="#fff"/><path d="M5 7H20M5 11.500H20M5 16H17" stroke="#333" stroke-width="1.500"/></svg><div class="badge">4</div></div>
<span class="dl"></span>
</div>`);

/* overlays */
def('scroll-badge',`:host{position:absolute;left:1905px;top:82px;width:11px;height:85px;border-radius:5px;background:#666;box-shadow:0 2px 3px rgba(0,0,0,.12)}
.g{position:absolute;left:1px;right:1px;top:48px;bottom:2px;background:repeating-linear-gradient(#35d24b 0 1px,#666 1px 4px)}`,()=>`<div class="g"></div>`);

def('ime-bar',`:host{position:absolute;left:1816px;top:1000px;width:104px;height:20px;border-radius:3px;display:flex;align-items:center;
background:linear-gradient(#0c8f0c,#047304);color:#d5e84a;white-space:nowrap;font-size:18px;line-height:20px}
.txt{position:absolute;left:10px;top:-1px}
.sl{position:absolute;left:65px;top:3px;width:2px;height:15px;background:#b9d63c}
.v1{position:absolute;left:69px;top:0;width:1px;height:20px;background:#024a02}
.v2{position:absolute;left:15px;top:0;width:1px;height:20px;background:#024a02}
svg{position:absolute;display:block}`,()=>`
<svg style="left:35px;top:-9px" width="24" height="9" viewBox="0 0 24 9"><rect x=".5" y=".5" width="4" height="8" fill="#fff" stroke="#b5b5b5"/><path d="M9 2H15M18 2H24M9 6H15M18 6H24" stroke="#b5b5b5"/></svg>
<svg style="left:69px;top:-6px" width="22" height="6" viewBox="0 0 22 6"><rect x="1" y="1" width="20" height="6" fill="#6fb2ec" stroke="#aab0b6"/></svg>
<div class="txt">五笔拼</div><span class="sl"></span>
<svg style="left:5px;top:6px" width="9" height="10" viewBox="0 0 9 10"><path d="M1 1L4.500 4L8 1M1 5.500L4.500 8.500L8 5.500" fill="none" stroke="#fff" stroke-width="1.600"/></svg>
<span class="v2"></span><span class="v1"></span>
<svg style="left:75px;top:4px" width="26" height="12" viewBox="0 0 26 12"><path d="M4 1C1 3 1 9 5 10C7 11 9 10 10 8C6 9 3 6 4 1z" fill="#fff"/><circle cx="16" cy="5" r="2" fill="none" stroke="#fff" stroke-width="1.200"/><path d="M22 3A1.600 1.600 0 1 1 23 6C23 8 22 9 21 10C21.500 8 21.500 7 21 6Z" fill="#fff"/></svg>`);
</script>
</body>
</html>
